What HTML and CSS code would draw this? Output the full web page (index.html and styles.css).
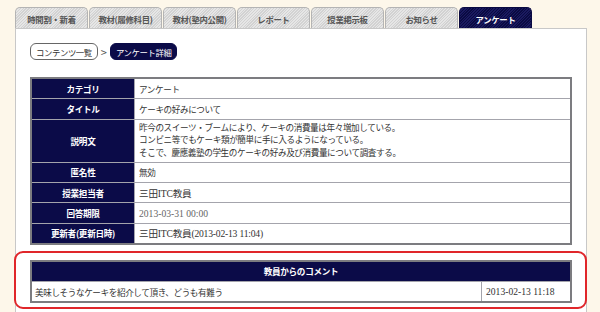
FILE: index.html
```html
<!DOCTYPE html>
<html lang="ja">
<head>
  <meta charset="UTF-8" />
  <title>アンケート詳細</title>
  <link rel="stylesheet" href="styles.css">
</head>
<body>
  <div class="page">
    <nav class="tabs">
      <div class="tab">時間割・新着</div>
      <div class="tab">教材(履修科目)</div>
      <div class="tab">教材(塾内公開)</div>
      <div class="tab">レポート</div>
      <div class="tab">授業掲示板</div>
      <div class="tab">お知らせ</div>
      <div class="tab active">アンケート</div>
    </nav>

    <main class="panel">
      <div class="crumbs">
        <span class="crumb">コンテンツ一覧</span>
        <span class="crumb-sep">&gt;</span>
        <span class="crumb current">アンケート詳細</span>
      </div>

      <!-- survey detail -->
      <div class="detail">
        <div class="label">カテゴリ</div>
        <div class="value">アンケート</div>
        <div class="label">タイトル</div>
        <div class="value">ケーキの好みについて</div>
        <div class="label">説明文</div>
        <div class="value multi">昨今のスイーツ・ブームにより、ケーキの消費量は年々増加している。<br>コンビニ等でもケーキ類が簡単に手に入るようになっている。<br>そこで、慶應義塾の学生のケーキの好み及び消費量について調査する。</div>
        <div class="label">匿名性</div>
        <div class="value">無効</div>
        <div class="label">授業担当者</div>
        <div class="value">三田ITC教員</div>
        <div class="label">回答期限</div>
        <div class="value muted">2013-03-31 00:00</div>
        <div class="label">更新者(更新日時)</div>
        <div class="value">三田ITC教員(2013-02-13 11:04)</div>
      </div>

      <!-- teacher comment -->
      <section class="highlight">
        <div class="comments">
          <div class="comments-head">教員からのコメント</div>
          <div class="comment-row">
            <div class="comment-text">美味しそうなケーキを紹介して頂き、どうも有難う</div>
            <div class="comment-date">2013-02-13 11:18</div>
          </div>
        </div>
      </section>
    </main>
  </div>
</body>
</html>
```

FILE: styles.css
```css
:root {
  --navy: #0b0b48;
  --cream: #fdf7ea;
  --grid: #a4a4ac;
  --frame: #7c7c80;
  --text: #333;
  --jp: "Noto Sans CJK JP", sans-serif;
  --mixed: "Liberation Serif", "Noto Sans CJK JP", serif;
}
body {
  margin: 0;
  background: var(--cream);
  color: var(--text);
  font-family: var(--jp);
  overflow: hidden;
}
.page {
  padding: 7px 0 0 15px;
  width: 572px;
}
.tabs {
  display: flex;
  gap: 1px;
  height: 21px;
}
.tab {
  width: 71px;
  border: 1px solid #b4b4b4;
  border-bottom: none;
  border-radius: 5px 5px 0 0;
  background: repeating-linear-gradient(135deg, #e6e6e6 0 1px, #d2d2d2 1px 2px);
  color: #555;
  font-size: 8.4px;
  font-weight: 700;
  letter-spacing: -0.3px;
  display: flex;
  align-items: center;
  justify-content: center;
  padding-top: 1px;
}
.tab.active {
  background: repeating-linear-gradient(135deg, #1a1a60 0 1px, #0a0a42 1px 2px);
  border-color: #0a0a42;
  color: #fff;
}
.panel {
  background: #fff;
  border: 1px solid #c8c8c8;
  border-bottom: none;
  padding: 14px 14px 8px;
}
.crumbs {
  display: flex;
  align-items: center;
  gap: 1px;
  height: 17px;
  margin-bottom: 17px;
}
.crumb {
  height: 17px;
  box-sizing: border-box;
  padding: 0 5px;
  border: 1px solid #666;
  border-radius: 6px;
  font-size: 8.4px;
  letter-spacing: -0.4px;
  display: flex;
  align-items: center;
}
.crumb.current {
  background: var(--navy);
  border-color: var(--navy);
  color: #fff;
}
.crumb-sep {
  font-size: 11px;
  color: #555;
  padding: 0 2px;
}
.detail {
  display: grid;
  grid-template-columns: 103px 1fr;
  border: 2px solid var(--frame);
  font-size: 8.6px;
}
.label, .value {
  min-height: 19.4px;
  border-bottom: 1px solid var(--grid);
  display: flex;
  align-items: center;
}
.label:nth-last-child(2), .value:last-child {
  border-bottom: none;
}
.label {
  background: var(--navy);
  color: #fff;
  font-weight: 700;
  justify-content: center;
  border-right: 1px solid var(--grid);
  letter-spacing: -0.3px;
}
.value {
  font-family: var(--mixed);
  padding-left: 4px;
  letter-spacing: -0.4px;
  background: #fff;
}
.value:nth-child(10), .value:nth-child(12), .value:nth-child(14) {
  font-size: 9.6px;
  letter-spacing: -0.2px;
}
.value.multi {
  display: block;
  line-height: 12.6px;
  padding-top: 2px;
  padding-bottom: 2px;
}
.value.muted {
  color: #666;
  letter-spacing: 0;
}
.highlight {
  margin: 6px -15px 0 -16px;
  border: 2px solid #e0262a;
  border-radius: 9px;
  padding: 7px 13px 4px 14px;
}
.comments {
  border: 2px solid var(--frame);
  font-size: 8.6px;
}
.comments-head {
  background: var(--navy);
  color: #fff;
  font-weight: 700;
  text-align: center;
  height: 19px;
  line-height: 19px;
  border-bottom: 1px solid var(--grid);
  letter-spacing: -0.3px;
}
.comment-row {
  display: flex;
  height: 19px;
  align-items: stretch;
}
.comment-text {
  flex: 1;
  padding-left: 3px;
  display: flex;
  align-items: center;
  letter-spacing: -0.4px;
}
.comment-date {
  width: 84px;
  border-left: 1px solid var(--grid);
  font-family: var(--mixed);
  font-size: 9.6px;
  padding-left: 4px;
  display: flex;
  align-items: center;
}
```
